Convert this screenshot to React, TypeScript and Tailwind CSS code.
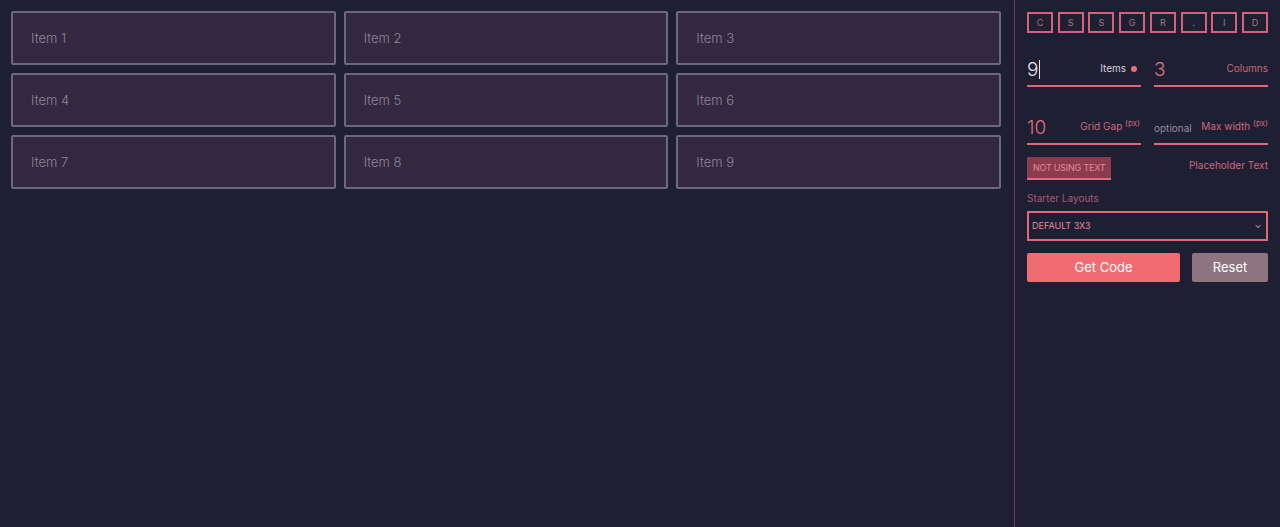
import React from 'react';

const letters = ['C', 'S', 'S', 'G', 'R', '.', 'I', 'D'];
const items = Array.from({ length: 9 }, (_, i) => `Item ${i + 1}`);

const App: React.FC = () => {
  return (
    <div
      className="flex w-full h-[527px] bg-[#1f1f33] overflow-hidden"
      style={{ fontFamily: 'Inter, "Liberation Sans", Arial, sans-serif' }}
    >
      {/* grid preview */}
      <div className="flex-1 pl-[11px] pr-[13px] pt-[11px]">
        <div className="grid grid-cols-3 gap-[8px]">
          {items.map(item => (
            <div
              key={item}
              className="h-[54px] bg-[#342840] border-2 border-[#6a6883] rounded-[2px] flex items-center pl-[18px] pt-[2px] text-[13px] font-light text-[#8d8699]"
            >
              {item}
            </div>
          ))}
        </div>
      </div>

      {/* settings panel */}
      <div className="w-[266px] border-l border-[#7a3456] px-[12px] pt-[12px]">
        <div className="flex justify-between">
          {letters.map((l, i) => (
            <div
              key={i}
              className="w-[26px] h-[21px] border-2 border-[#d9607a] flex items-center justify-center text-[9px] text-[#a87486]"
            >
              {l}
            </div>
          ))}
        </div>

        <div className="flex gap-[13px] mt-[27px]">
          <div className="flex-1 flex items-end justify-between border-b-2 border-[#e06878] pb-[6px]">
            <span className="text-[19px] leading-none font-light text-[#e8e4ee] border-r border-[#e8e4ee] pr-[1px]">9</span>
            <span className="flex items-center gap-[5px] text-[10px] text-[#d9d3dc] mb-[3px] mr-[4px]">
              Items
              <span className="w-[6px] h-[6px] rounded-full bg-[#f06b75]" />
            </span>
          </div>
          <div className="flex-1 flex items-end justify-between border-b-2 border-[#e06878] pb-[6px]">
            <span className="text-[19px] leading-none font-light text-[#e0707d]">3</span>
            <span className="text-[10px] text-[#c76a7e] mb-[3px]">Columns</span>
          </div>
        </div>

        <div className="flex gap-[13px] mt-[31px]">
          <div className="flex-1 flex items-end justify-between border-b-2 border-[#e06878] pb-[6px]">
            <span className="text-[19px] leading-none font-light text-[#e0707d]">10</span>
            <span className="text-[10px] text-[#c76a7e] mb-[3px] mr-[1px]">
              Grid Gap <sup className="text-[8px]">(px)</sup>
            </span>
          </div>
          <div className="flex-1 flex items-end justify-between border-b-2 border-[#e06878] pb-[6px]">
            <span className="text-[10px] text-[#8f8a9b] mb-[1px]">optional</span>
            <span className="text-[10px] text-[#c76a7e] mb-[3px]">
              Max width <sup className="text-[8px]">(px)</sup>
            </span>
          </div>
        </div>

        <div className="flex items-center justify-between mt-[12px]">
          <button className="h-[23px] px-[6px] bg-[#8a3b4d] border-b-2 border-[#e07080] text-[9px] text-[#e48a98] tracking-tight">
            NOT USING TEXT
          </button>
          <span className="text-[10px] text-[#c76a7e] -mt-[6px]">Placeholder Text</span>
        </div>

        <div className="mt-[11px] text-[10px] text-[#a55a72]">Starter Layouts</div>

        <div className="mt-[5px] h-[30px] border-2 border-[#e0687a] flex items-center justify-between px-[3px]">
          <span className="text-[9px] text-[#e68a98]">DEFAULT 3X3</span>
          <svg width="8" height="8" viewBox="0 0 10 10" className="mr-[1px]">
            <path d="M2 4 L5 7 L8 4" fill="none" stroke="#b98595" strokeWidth="1.3" />
          </svg>
        </div>

        <div className="flex justify-between mt-[12px]">
          <button className="w-[153px] h-[29px] rounded-[2px] bg-[#f06b72] text-white text-[13px]">
            Get Code
          </button>
          <button className="w-[76px] h-[29px] rounded-[2px] bg-[#8e747f] text-white text-[13px]">
            Reset
          </button>
        </div>
      </div>
    </div>
  );
};

export default App;
